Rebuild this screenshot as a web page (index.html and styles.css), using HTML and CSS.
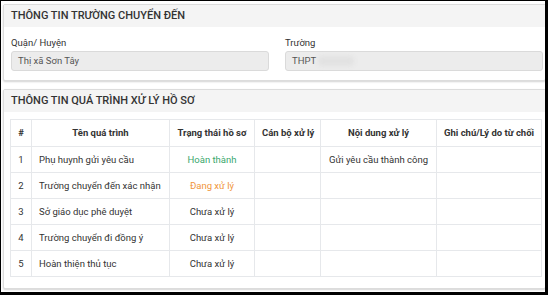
FILE: index.html
```html
<!DOCTYPE html>
<html lang="vi">
<head>
<meta charset="utf-8">
<link rel="stylesheet" href="styles.css">
</head>
<body>
<div class="frame">
  <section class="card card-school">
    <div class="card-head">THÔNG TIN TRƯỜNG CHUYỂN ĐẾN</div>
    <div class="card-body fields">
      <div class="field">
        <label class="label">Quận/ Huyện</label>
        <div class="input">Thị xã Sơn Tây</div>
      </div>
      <div class="field">
        <label class="label">Trường</label>
        <div class="input">THPT<span class="blur"></span></div>
      </div>
    </div>
  </section>
  <section class="card card-process">
    <div class="card-head">THÔNG TIN QUÁ TRÌNH XỬ LÝ HỒ SƠ</div>
    <div class="card-body table-wrap">
      <table class="grid">
        <colgroup>
          <col class="c1"><col class="c2"><col class="c3"><col class="c4"><col class="c5"><col class="c6">
        </colgroup>
        <thead>
          <tr><th>#</th><th>Tên quá trình</th><th>Trạng thái hồ sơ</th><th>Cán bộ xử lý</th><th>Nội dung xử lý</th><th>Ghi chú/Lý do từ chối</th></tr>
        </thead>
        <tbody>
          <tr><td class="num">1</td><td class="name">Phụ huynh gửi yêu cầu</td><td class="st done">Hoàn thành</td><td></td><td class="ct">Gửi yêu cầu thành công</td><td></td></tr>
          <tr><td class="num">2</td><td class="name">Trường chuyển đến xác nhận</td><td class="st doing">Đang xử lý</td><td></td><td></td><td></td></tr>
          <tr><td class="num">3</td><td class="name">Sở giáo dục phê duyệt</td><td class="st">Chưa xử lý</td><td></td><td></td><td></td></tr>
          <tr><td class="num">4</td><td class="name">Trường chuyển đi đồng ý</td><td class="st">Chưa xử lý</td><td></td><td></td><td></td></tr>
          <tr><td class="num">5</td><td class="name">Hoàn thiện thủ tục</td><td class="st">Chưa xử lý</td><td></td><td></td><td></td></tr>
        </tbody>
      </table>
    </div>
  </section>
</div>
</body>
</html>
```
FILE: styles.css
```css
html { background: #000; }
body {
  margin: 1px 3px 3px 1px;
  font-family: Roboto, "Liberation Sans", Arial, sans-serif;
  color: #333;
}
.frame {
  width: 544px;
  height: 291px;
  background: #fff;
  overflow: hidden;
  padding-top: 3px;
  box-sizing: border-box;
}
.card {
  margin-left: 2px;
  width: 543px;
  box-sizing: border-box;
  border: 1px solid #dcdcdc;
  border-radius: 2px;
  background: #fff;
  box-shadow: 0 1px 2px rgba(0,0,0,0.18);
}
.card-process { margin-top: 8px; }
.card-head {
  height: 22px;
  line-height: 22px;
  padding-left: 7px;
  background: #f4f4f4;
  font-size: 11px;
  font-weight: 500;
  color: #333;
}
.fields {
  display: flex;
  gap: 16px;
  padding: 10px 2px 9px 7px;
}
.field { flex: 1; display: flex; flex-direction: column; }
.label {
  font-size: 9.5px;
  line-height: 12px;
  color: #333;
  margin-bottom: 2px;
}
.input {
  height: 20px;
  box-sizing: border-box;
  border: 1px solid #dadada;
  border-radius: 3px;
  background: #ececec;
  font-size: 9.5px;
  line-height: 18px;
  padding-left: 6px;
  color: #555;
  display: flex;
  align-items: center;
}
.blur {
  display: inline-block;
  width: 36px;
  height: 10px;
  margin-left: 2px;
  background: #e2e2e2;
  border-radius: 4px;
  filter: blur(2px);
}
.table-wrap { padding: 7px 2px 11px 6px; }
.grid {
  border-collapse: collapse;
  width: 531px;
  table-layout: fixed;
  font-size: 9.5px;
}
.c1 { width: 21px; } .c2 { width: 138px; } .c3 { width: 85px; }
.c4 { width: 66px; } .c5 { width: 116px; } .c6 { width: 105px; }
.grid th, .grid td {
  border: 1.5px solid #e6e8eb;
  height: 25.2px;
  padding: 0 7px;
  text-align: center;
  white-space: nowrap;
  color: #333;
}
.grid th { font-weight: 700; height: 25.5px; }
.grid td.name { text-align: left; }
.grid td.num { padding: 0; }
.grid td.done { color: #3aa76d; }
.grid td.doing { color: #f0953a; }
```
